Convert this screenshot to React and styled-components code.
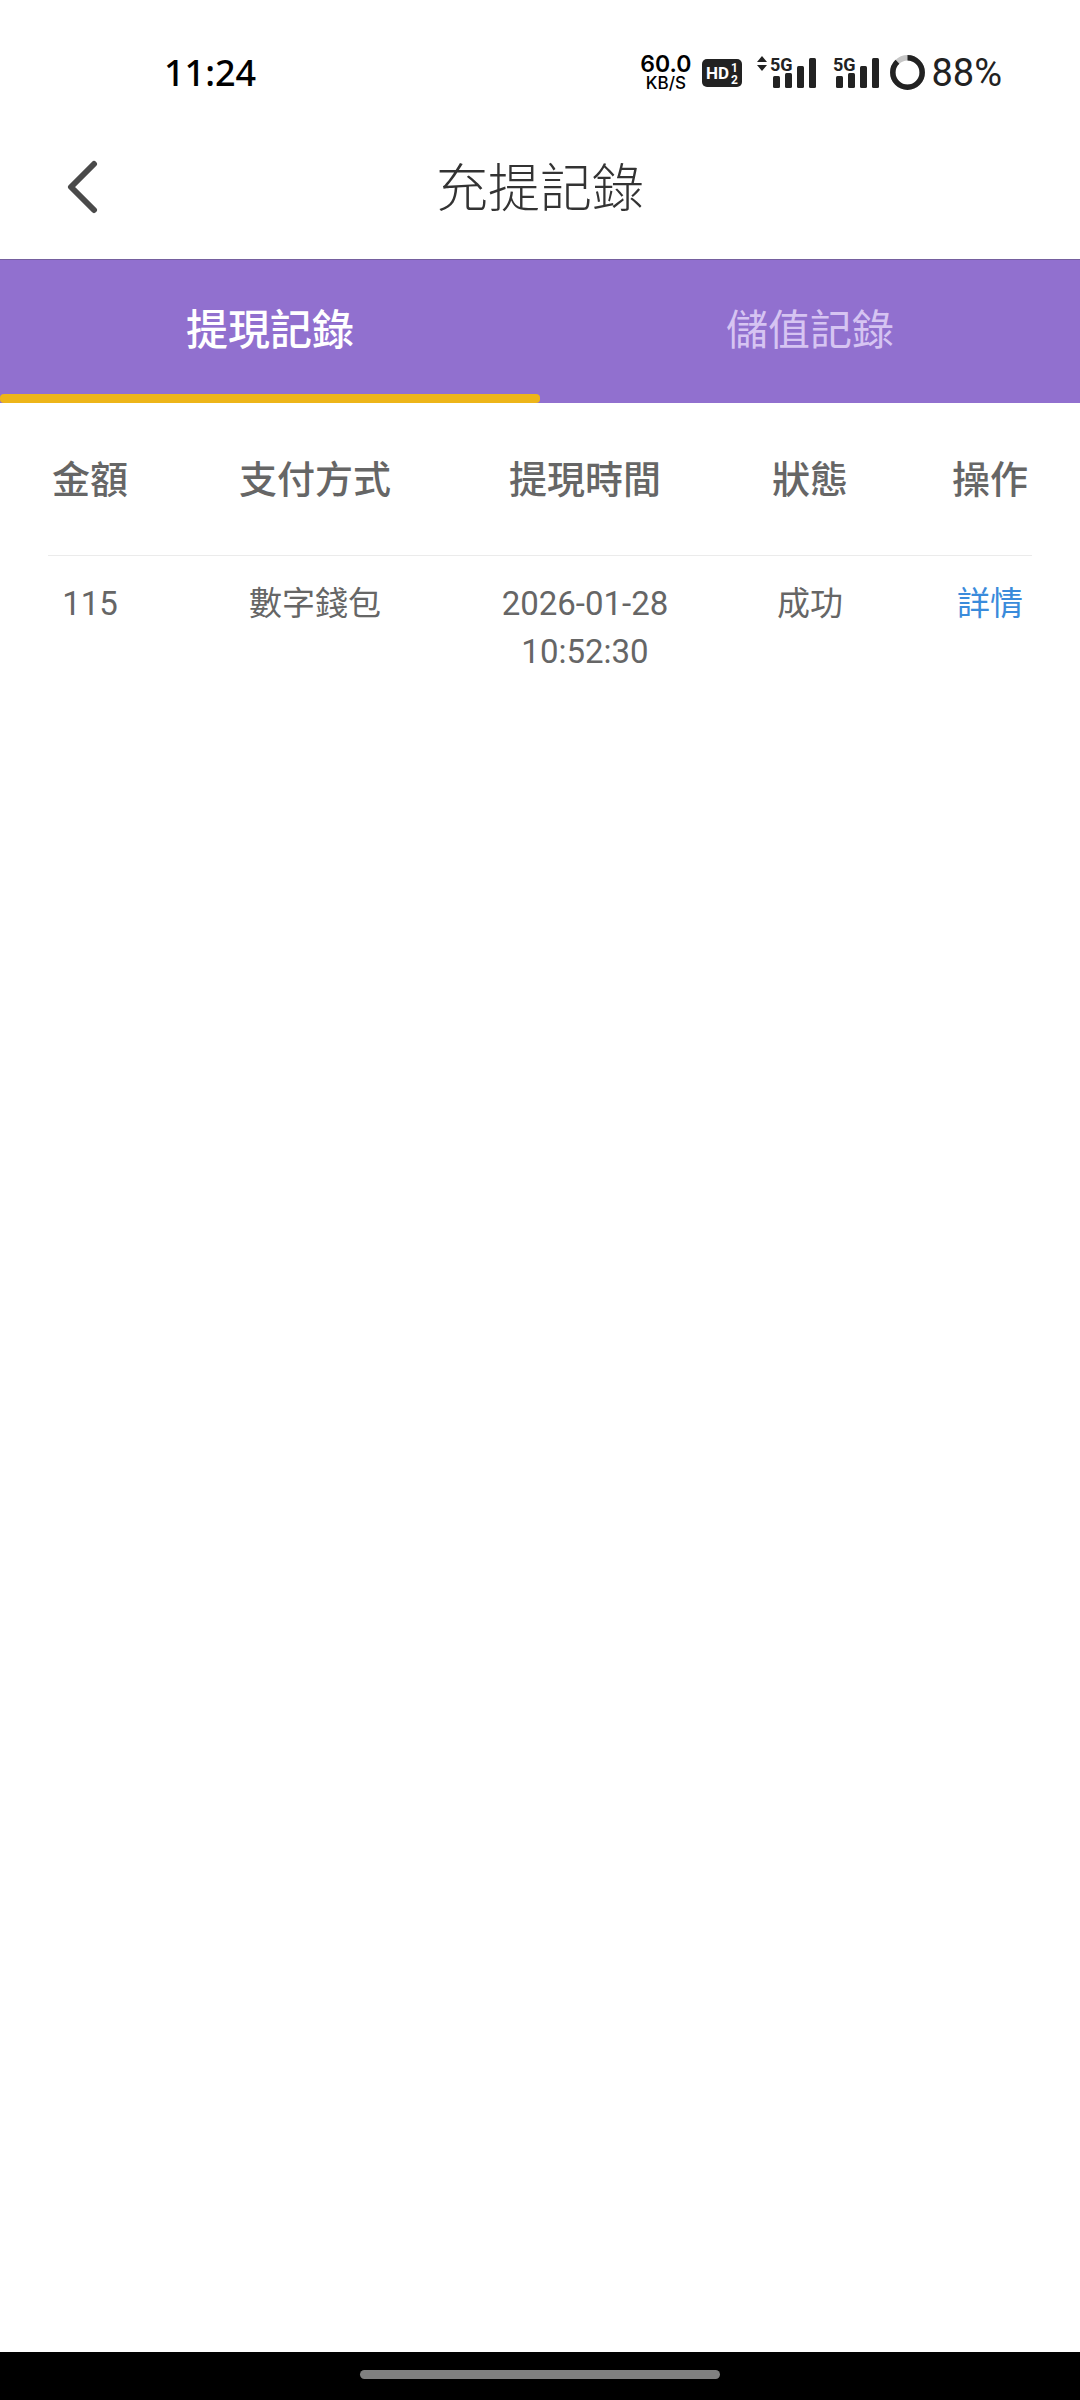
import React, { useCallback, useState } from "react";
import styled, { createGlobalStyle } from "styled-components";

const GlobalStyle = createGlobalStyle`
  * {
    box-sizing: border-box;
  }
  body {
    margin: 0;
    background: #fff;
    font-family: Roboto, "Noto Sans CJK TC", sans-serif;
    color: #666;
  }
  button {
    border: 0;
    padding: 0;
    background: none;
    font-family: inherit;
    cursor: pointer;
  }
`;

const StyledPage = styled.div`
  min-height: 100vh;
  display: flex;
  flex-direction: column;
`;

const StyledStatusBar = styled.div`
  height: 115px;
  padding: 30px 78px 0 164px;
  display: flex;
  justify-content: space-between;
  align-items: center;
  color: #222;
`;

const StyledClock = styled.time`
  font-family: "Noto Sans", sans-serif;
  font-weight: 500;
  font-size: 36px;
  line-height: 40px;
  color: #000;
`;

const StyledStatusIcons = styled.div`
  display: flex;
  align-items: center;
`;

const StyledSpeed = styled.div`
  display: flex;
  flex-direction: column;
  align-items: center;
  margin-right: 11px;
  font-family: Inter, sans-serif;
  color: #000;
`;

const StyledSpeedValue = styled.span`
  font-weight: 600;
  font-size: 23px;
  line-height: 20px;
`;

const StyledSpeedUnit = styled.span`
  font-weight: 500;
  font-size: 17px;
  line-height: 18px;
`;

const StyledBattery = styled.span`
  margin-left: 6px;
  font-size: 38px;
  line-height: 40px;
`;

const StyledIcon = styled.svg`
  display: block;
  flex: none;
  margin-left: ${({ $gap }) => $gap || 0}px;
  text {
    font-family: Roboto, sans-serif;
    font-weight: 700;
  }
`;

const StyledHeader = styled.header`
  height: 144px;
  padding: 0 48px;
  display: grid;
  grid-template-columns: 72px 1fr 72px;
  align-items: center;
`;

const StyledBack = styled.button`
  height: 72px;
  display: flex;
  align-items: center;
  padding-left: 16px;
`;

const StyledTitle = styled.h1`
  margin: 0;
  padding-top: 6px;
  font-weight: 300;
  font-size: 52px;
  line-height: 72px;
  text-align: center;
  color: #333;
`;

const StyledTabs = styled.div`
  display: flex;
  height: 144px;
  background: #9170cf;
  border-top: 1px solid #75609f;
`;

const StyledTab = styled.button`
  flex: 1;
  display: flex;
  flex-direction: column;
  font-size: 42px;
  line-height: 60px;
  font-weight: ${({ $active }) => ($active ? 500 : 400)};
  color: ${({ $active }) => ($active ? "#fff" : "#d6c4f2")};
`;

const StyledTabLabel = styled.span`
  flex: 1;
  width: 100%;
  padding-top: 8px;
  display: flex;
  align-items: center;
  justify-content: center;
`;

const StyledTabLine = styled.span`
  width: 100%;
  height: 9px;
  border-radius: 4px;
  background: ${({ $active }) => ($active ? "#edb519" : "transparent")};
`;

const StyledMain = styled.main`
  flex: 1;
`;

const StyledTable = styled.table`
  width: 100%;
  table-layout: fixed;
  border-collapse: collapse;
  text-align: center;
`;

const StyledCol = styled.col`
  width: calc(100% * ${({ $span }) => $span} / 24);
`;

const StyledHeadRow = styled.tr`
  background: linear-gradient(#ebebeb, #ebebeb) center bottom / calc(100% - 96px) 1px no-repeat;
`;

const StyledTh = styled.th`
  height: 153px;
  padding: 0;
  font-weight: 500;
  font-size: 38px;
  line-height: 48px;
`;

const StyledTd = styled.td`
  padding: 24px 24px;
  vertical-align: top;
  font-size: 33px;
  line-height: 48px;
`;

const StyledLink = styled.a`
  color: #3a8bdb;
  text-decoration: none;
`;

const StyledNavBar = styled.div`
  height: 48px;
  padding-top: 18px;
  background: #000;
`;

const StyledHandle = styled.div`
  width: 33.333%;
  height: 9px;
  margin: 0 auto;
  border-radius: 5px;
  background: #808080;
`;

const columns = [
  { title: "金額", span: 4 },
  { title: "支付方式", span: 6 },
  { title: "提現時間", span: 6 },
  { title: "狀態", span: 4 },
  { title: "操作", span: 4 },
];

const records = {
  withdraw: [
    { amount: "115", method: "數字錢包", time: "2026-01-28 10:52:30", status: "成功" },
  ],
  deposit: [],
};

const tabs = [
  { id: "withdraw", label: "提現記錄" },
  { id: "deposit", label: "儲值記錄" },
];

const HdIcon = () => (
  <StyledIcon width="40" height="28" viewBox="0 0 40 28">
    <rect width="40" height="28" rx="5" fill="#222" />
    <text x="4" y="20" fontSize="17" fill="#fff">HD</text>
    <text x="29" y="13" fontSize="12" fill="#fff">1</text>
    <text x="29" y="25" fontSize="12" fill="#fff">2</text>
  </StyledIcon>
);

const SignalIcon = ({ arrows, gap }) => {
  const x = arrows ? 13 : 0;
  return (
    <StyledIcon $gap={gap} width={46 + x} height="38" viewBox={`0 0 ${46 + x} 38`} fill="#222">
      {arrows && <path d="M5 2l5 6H0zM0 11h10l-5 6z" />}
      <text x={x} y="17" fontSize="18">5G</text>
      <rect x={x + 3} y="22" width="7" height="12" rx="1.5" />
      <rect x={x + 15} y="19" width="7" height="15" rx="1.5" />
      <rect x={x + 27} y="12" width="7" height="22" rx="1.5" />
      <rect x={x + 39} y="4" width="7" height="30" rx="1.5" />
    </StyledIcon>
  );
};

const BatteryRing = ({ level }) => (
  <StyledIcon $gap={11} width="35" height="35" viewBox="0 0 35 35" fill="none" strokeWidth="5.5">
    <circle cx="17.5" cy="17.5" r="14.7" stroke="#c6c6c6" />
    <circle
      cx="17.5"
      cy="17.5"
      r="14.7"
      stroke="#222"
      pathLength="100"
      strokeDasharray={`${level} 100`}
      transform="rotate(-90 17.5 17.5)"
    />
  </StyledIcon>
);

export default function App() {
  const [active, setActive] = useState("withdraw");

  const handleBack = useCallback(() => {
    window.history.back();
  }, []);

  return (
    <StyledPage>
      <GlobalStyle />
      <StyledStatusBar>
        <StyledClock>11:24</StyledClock>
        <StyledStatusIcons>
          <StyledSpeed>
            <StyledSpeedValue>60.0</StyledSpeedValue>
            <StyledSpeedUnit>KB/S</StyledSpeedUnit>
          </StyledSpeed>
          <HdIcon />
          <SignalIcon arrows gap={15} />
          <SignalIcon gap={17} />
          <BatteryRing level={88} />
          <StyledBattery>88%</StyledBattery>
        </StyledStatusIcons>
      </StyledStatusBar>
      <StyledHeader>
        <StyledBack type="button" aria-label="返回" onClick={handleBack}>
          <svg width="34" height="54" viewBox="0 0 34 54" fill="none">
            <path d="M30 4L7 27l23 23" stroke="#4a4a4a" strokeWidth="6" strokeLinecap="round" strokeLinejoin="round" />
          </svg>
        </StyledBack>
        <StyledTitle>充提記錄</StyledTitle>
      </StyledHeader>
      <StyledTabs role="tablist">
        {tabs.map(({ id, label }) => (
          <StyledTab
            key={id}
            type="button"
            role="tab"
            aria-selected={active === id}
            $active={active === id}
            onClick={() => setActive(id)}
          >
            <StyledTabLabel>{label}</StyledTabLabel>
            <StyledTabLine $active={active === id} />
          </StyledTab>
        ))}
      </StyledTabs>
      <StyledMain>
        <StyledTable>
          <colgroup>
            {columns.map(({ title, span }) => (
              <StyledCol key={title} $span={span} />
            ))}
          </colgroup>
          <thead>
            <StyledHeadRow>
              {columns.map(({ title }) => (
                <StyledTh key={title} scope="col">{title}</StyledTh>
              ))}
            </StyledHeadRow>
          </thead>
          <tbody>
            {records[active].map(({ amount, method, time, status }) => (
              <tr key={time}>
                <StyledTd>{amount}</StyledTd>
                <StyledTd>{method}</StyledTd>
                <StyledTd>{time}</StyledTd>
                <StyledTd>{status}</StyledTd>
                <StyledTd><StyledLink href="#detail">詳情</StyledLink></StyledTd>
              </tr>
            ))}
          </tbody>
        </StyledTable>
      </StyledMain>
      <StyledNavBar>
        <StyledHandle />
      </StyledNavBar>
    </StyledPage>
  );
}
